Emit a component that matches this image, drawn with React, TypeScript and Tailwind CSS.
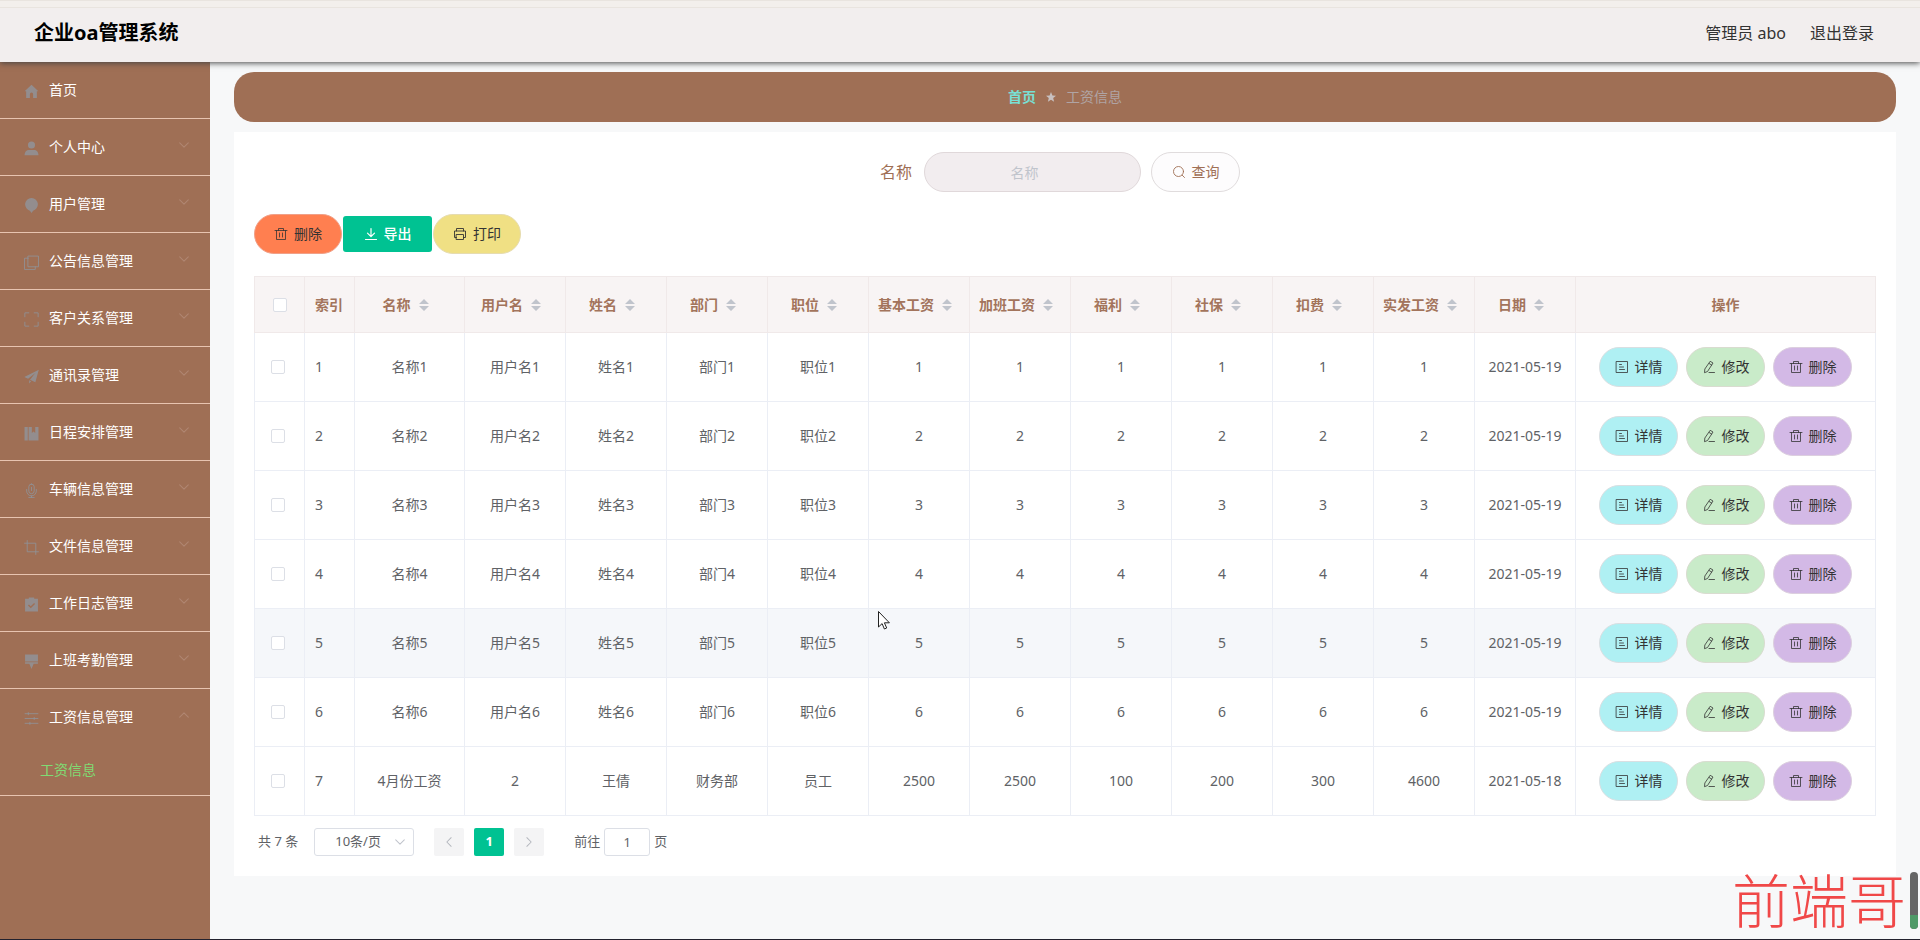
import type { ReactNode } from 'react';

type IconProps = { className?: string };

function Svg({ className = 'size-3.5', children }: IconProps & { children: ReactNode }) {
  return (
    <svg
      viewBox="0 0 14 14"
      className={className}
      fill="none"
      stroke="currentColor"
      strokeWidth="0.9"
      strokeLinecap="round"
      strokeLinejoin="round"
      aria-hidden="true"
    >
      {children}
    </svg>
  );
}

const Trash = () => (
  <Svg>
    <path strokeWidth="0.8" d="M1 3.500h12M4.500 3.500v-2h5v2M2.500 3.500v9h9v-9M5.500 6v4M8.500 6v4" />
  </Svg>
);
const Detail = () => (
  <Svg>
    <path strokeWidth="0.8" d="M1.500 1.500h11v11h-11zM4.500 4.500h2M4.500 7h4M4.500 9.500h5" />
  </Svg>
);
const Edit = () => (
  <Svg>
    <path strokeWidth="0.8" d="M8.500 1.500l2.500 1.500-5.500 8.500-3 1.200.3-3.300zM7.300 3.600l2.400 1.500M7 12.500h5.500" />
  </Svg>
);
const Download = () => (
  <Svg>
    <path strokeWidth="1.200" d="M7 1.500v8M3.500 6.200l3.500 3.500 3.500-3.500M1.500 12.500h11" />
  </Svg>
);
const Printer = () => (
  <Svg>
    <path d="M3.500 4v-2.500h7v2.500M3.500 10.500h-2v-6.500h11v6.500h-2M3.500 7.500h7v5h-7z" />
  </Svg>
);
const Search = () => (
  <Svg>
    <circle cx="6.500" cy="6.500" r="5" />
    <path d="M10.200 10.200l2.300 2.300" />
  </Svg>
);
const Chevron = ({ className = 'size-3' }: IconProps) => (
  <Svg className={className}>
    <path strokeWidth="1.200" d="M2 4.500l5 5 5-5" />
  </Svg>
);

const menuIcons: ReactNode[] = [
  <path key="home" fill="currentColor" stroke="none" d="M7 .8L.6 6.800h1.400v6.200h3.500v-3.500a1.500 1.500 0 0 1 3 0v3.500h3.500v-6.200h1.400z" />,
  <path key="user" fill="currentColor" stroke="none" d="M7 .5a3.300 3.300 0 1 1 0 6.600 3.300 3.300 0 0 1 0-6.600zM.5 13.300c0-3.300 2-5 4-5h5c2 0 4 1.700 4 5z" />,
  <path key="balloon" fill="currentColor" stroke="none" d="M7 0a6 6 0 0 1 6 5.500c0 2.800-2 5.500-4.500 6.500L7 14l-1.500-2C3 11 1 8.300 1 5.500a6 6 0 0 1 6-5.500z" />,
  <path key="copy" d="M4 1h9.500v10h-9.500zM4 3h-3.500v10.500h10v-2.500" />,
  <path key="full" d="M.8 4.500v-3.700h3.700M9.500.8h3.700v3.700M13.200 9.500v3.700h-3.700M4.500 13.200h-3.700v-3.700" />,
  <path key="plane" fill="currentColor" stroke="none" d="M13.800.8L.3 7.500l3.500 1.600 6.800-5.300-5 6.300 5 2.300zM4.800 10.500v3l1.900-2.100z" />,
  <path key="book" fill="currentColor" stroke="none" d="M.5 1h3v12.500h-3zM4.300 1h3v5.500l1.600-1.300 1.600 1.300v-5.500h3v12.500h-9.200z" />,
  <path key="mic" d="M7 1a2.500 2.500 0 0 1 2.500 2.500v4a2.500 2.500 0 0 1-5 0v-4a2.500 2.500 0 0 1 2.500-2.500zM2.500 6v1.500a4.500 4.500 0 0 0 9 0v-1.500M7 12v1.500M4.500 13.500h5M7 4v3" />,
  <path key="crop" d="M3 .5v10.500h10.500M.5 3h10.500v10.500" />,
  <path key="claim" fill="currentColor" stroke="none" fillRule="evenodd" d="M4.500.5h5v1.200h3.500v11.800h-12v-11.800h3.500zM6.300 10.500l4-4-.9-.9-3.100 3-1.700-1.600-.9.900z" />,
  <path key="brush" fill="currentColor" stroke="none" d="M1 .5h12v6.500h-12zM1 7.700h12v1.500h-4l-2 4.800-2-4.800h-4z" />,
  <path key="operation" d="M1 2.500h12M1 7h12M1 11.500h12M4 1.500v2M9.500 6v2M5.500 10.500v2" />,
];

const menu = [
  '首页',
  '个人中心',
  '用户管理',
  '公告信息管理',
  '客户关系管理',
  '通讯录管理',
  '日程安排管理',
  '车辆信息管理',
  '文件信息管理',
  '工作日志管理',
  '上班考勤管理',
  '工资信息管理',
];

const columns = [
  '名称',
  '用户名',
  '姓名',
  '部门',
  '职位',
  '基本工资',
  '加班工资',
  '福利',
  '社保',
  '扣费',
  '实发工资',
  '日期',
];

const rows: string[][] = [
  ...[1, 2, 3, 4, 5, 6].map((n) => {
    const v = String(n);
    return [`名称${n}`, `用户名${n}`, `姓名${n}`, `部门${n}`, `职位${n}`, v, v, v, v, v, v, '2021-05-19'];
  }),
  ['4月份工资', '2', '王倩', '财务部', '员工', '2500', '2500', '100', '200', '300', '4600', '2021-05-18'],
];

const hoveredRow = 4;

function Sidebar() {
  return (
    <nav className="w-[210px] shrink-0 bg-[#9f6f55] text-sm text-white">
      <ul>
        {menu.map((label, i) => {
          const open = i === menu.length - 1;
          return (
            <li key={label} className="border-b border-[#e8c4b0]">
              <a href="#" className="flex h-14 items-center gap-2.5 pr-5 pl-6">
                <Svg className="mt-0.5 size-[15px] shrink-0 text-[#909399]/85">{menuIcons[i]}</Svg>
                <span className="grow">{label}</span>
                {i > 0 && (
                  <Chevron
                    className={
                      open ? 'mb-1 size-3 rotate-180 text-[#b08672]' : 'mb-1 size-3 text-[#b08672]'
                    }
                  />
                )}
              </a>
              {open && (
                <a href="#" className="flex h-[50px] items-center pl-10 text-[#7fdc73]">
                  工资信息
                </a>
              )}
            </li>
          );
        })}
      </ul>
    </nav>
  );
}

const boxClass = 'block size-3.5 appearance-none rounded-xs border border-[#dcdfe6] bg-white';

function SalaryTable() {
  return (
    <table className="w-full table-fixed border-collapse text-center text-sm text-[#606266]">
      <colgroup>
        <col className="w-[50px]" />
        <col className="w-[50px]" />
        <col className="w-[110px]" />
        {columns.slice(1).map((c) => (
          <col key={c} />
        ))}
        <col className="w-[300px]" />
      </colgroup>
      <thead>
        <tr className="h-14 bg-[#f8f4f4] text-[#a3745c]">
          <th className="border border-[#f0e9e9]">
            <input type="checkbox" aria-label="全选" className={`${boxClass} mx-auto`} />
          </th>
          <th className="border border-[#f0e9e9] pl-2.5 text-left">索引</th>
          {columns.map((c) => (
            <th key={c} className="border border-[#f0e9e9] pr-2">
              <span className="flex items-center justify-center gap-2 whitespace-nowrap">
                {c}
                <svg viewBox="0 0 10 12" className="h-3 w-2.5 fill-[#c0c4cc]" aria-hidden="true">
                  <path d="M5 0l5 5H0zM5 12l5-5H0z" />
                </svg>
              </span>
            </th>
          ))}
          <th className="border border-[#f0e9e9]">操作</th>
        </tr>
      </thead>
      <tbody>
        {rows.map((row, i) => (
          <tr key={i} className={i === hoveredRow ? 'h-[69px] bg-[#f5f7fa]' : 'h-[69px]'}>
            <td className="border border-[#ebeef5] pl-4">
              <input type="checkbox" aria-label={`选择第${i + 1}行`} className={boxClass} />
            </td>
            <td className="border border-[#ebeef5] pl-2.5 text-left">{i + 1}</td>
            {row.map((v, j) => (
              <td key={j} className="border border-[#ebeef5]">
                {v}
              </td>
            ))}
            <td className="border border-[#ebeef5]">
              <div className="flex justify-center gap-2 text-[#333]">
                <button type="button" className="flex h-10 w-[79px] items-center justify-center gap-1.5 rounded-full border border-[#d9dfe2] bg-[#aff0f3]">
                  <Detail />
                  详情
                </button>
                <button type="button" className="flex h-10 w-[79px] items-center justify-center gap-1.5 rounded-full border border-[#d9dcd0] bg-[#c9ebc9]">
                  <Edit />
                  修改
                </button>
                <button type="button" className="flex h-10 w-[79px] items-center justify-center gap-1.5 rounded-full border border-[#dccfdf] bg-[#d3b9e6]">
                  <Trash />
                  删除
                </button>
              </div>
            </td>
          </tr>
        ))}
      </tbody>
    </table>
  );
}

function Pagination() {
  return (
    <div className="flex items-center pt-3 pl-1 text-[13px] text-[#606266]">
      <span>共 7 条</span>
      <div className="relative ml-4">
        <select
          aria-label="每页条数"
          className="block h-7 w-[100px] appearance-none rounded-[3px] border border-[#dcdfe6] bg-white pl-5"
        >
          <option>10条/页</option>
        </select>
        <Chevron className="pointer-events-none absolute top-2 right-2 size-3 text-[#c0c4cc]" />
      </div>
      <button type="button" aria-label="上一页" className="ml-5 flex h-7 w-[30px] items-center justify-center rounded-xs bg-[#f4f4f5] text-[#b4b7be]">
        <Chevron className="size-3 rotate-90" />
      </button>
      <button type="button" className="ml-2.5 h-7 w-[30px] rounded-xs bg-[#00c292] font-bold text-white">
        1
      </button>
      <button type="button" aria-label="下一页" className="ml-2.5 flex h-7 w-[30px] items-center justify-center rounded-xs bg-[#f4f4f5] text-[#b4b7be]">
        <Chevron className="size-3 -rotate-90" />
      </button>
      <label className="ml-[30px] flex items-center gap-1">
        前往
        <input
          defaultValue="1"
          className="h-7 w-[46px] rounded-[3px] border border-[#dcdfe6] bg-white text-center"
        />
        页
      </label>
    </div>
  );
}

export default function App() {
  return (
    <div className="relative flex min-h-screen flex-col overflow-hidden border-b border-[#22222e] bg-[#f7f8f9] font-['Noto_Sans','Noto_Sans_CJK_SC',sans-serif]">
      <header className="relative z-10 flex h-[62px] items-center justify-between bg-[#f2eeee] pr-[46px] pl-[34px] pt-1 shadow-[0_1px_6px_#444]">
        <div className="absolute inset-x-0 top-0 h-2 border-y border-[#e9e4df] bg-[#f3efec]" />
        <h1 className="text-xl font-bold text-black">企业oa管理系统</h1>
        <div className="flex gap-6 text-base text-[#333]">
          <span>管理员 abo</span>
          <a href="#">退出登录</a>
        </div>
      </header>
      <div className="flex grow">
        <Sidebar />
        <main className="min-w-0 grow px-6 pt-2.5">
          <div className="flex h-[50px] items-center justify-center gap-2.5 rounded-[20px] bg-[#9f6f55] text-sm">
            <a href="#" className="font-bold text-[#78e0d4]">
              首页
            </a>
            <svg viewBox="0 0 10 10" className="size-2.5 fill-[#c8c0c0]" aria-hidden="true">
              <path d="M5 0l1.400 3.400 3.600.3-2.800 2.400.9 3.600L5 7.800 1.900 9.700l.9-3.600L0 3.700l3.600-.3z" />
            </svg>
            <span className="text-[#b0a4a4]">工资信息</span>
          </div>
          <section className="mt-2.5 bg-white px-5 pt-5 pb-5">
            <form className="flex items-center justify-center pr-2.5">
              <label htmlFor="name" className="mr-3 text-base text-[#9f6f55]">
                名称
              </label>
              <input
                id="name"
                placeholder="名称"
                className="h-10 w-[217px] rounded-full border border-[#e0d8da] bg-[#f2edef] px-4 pr-8 text-center text-sm placeholder:text-[#c0c4cc]"
              />
              <button
                type="button"
                className="ml-2.5 flex h-10 w-[89px] items-center justify-center gap-1.5 rounded-full border border-[#e0dcdd] bg-[#fdfcfd] text-sm text-[#9f6f55]"
              >
                <Search />
                查询
              </button>
            </form>
            <div className="mt-[22px] mb-[22px] flex items-center gap-px text-sm text-[#333]">
              <button type="button" className="flex h-10 w-[88px] items-center justify-center gap-1.5 rounded-full border border-[#f0a088] bg-[#ff7f50]">
                <Trash />
                删除
              </button>
              <button type="button" className="flex h-9 w-[89px] items-center justify-center gap-1.5 rounded-[3px] bg-[#00c292] font-medium text-white">
                <Download />
                导出
              </button>
              <button type="button" className="flex h-10 w-[88px] items-center justify-center gap-1.5 rounded-full border border-[#e6dcb0] bg-[#f0e084]">
                <Printer />
                打印
              </button>
            </div>
            <SalaryTable />
            <Pagination />
          </section>
        </main>
      </div>
      <div className="pointer-events-none absolute right-[14px] bottom-0 font-['Liberation_Serif','Noto_Sans_CJK_SC',serif] text-[58px] leading-[70px] font-light text-[#f04848]">
        前端哥
      </div>
      <div className="absolute right-0.5 bottom-2.5 flex h-[57px] w-2 flex-col justify-end overflow-hidden rounded-full bg-[#666]">
        <div className="h-3.5 bg-[#4f9a68]" />
      </div>
      <svg viewBox="0 0 12 19" className="pointer-events-none absolute top-[611px] left-[878px] h-[19px] w-3" aria-hidden="true">
        <path d="M.5.5v15.500l3.600-3.400 2.300 5.400 2.300-1-2.300-5.200h5z" fill="#fff" stroke="#222" />
      </svg>
    </div>
  );
}
